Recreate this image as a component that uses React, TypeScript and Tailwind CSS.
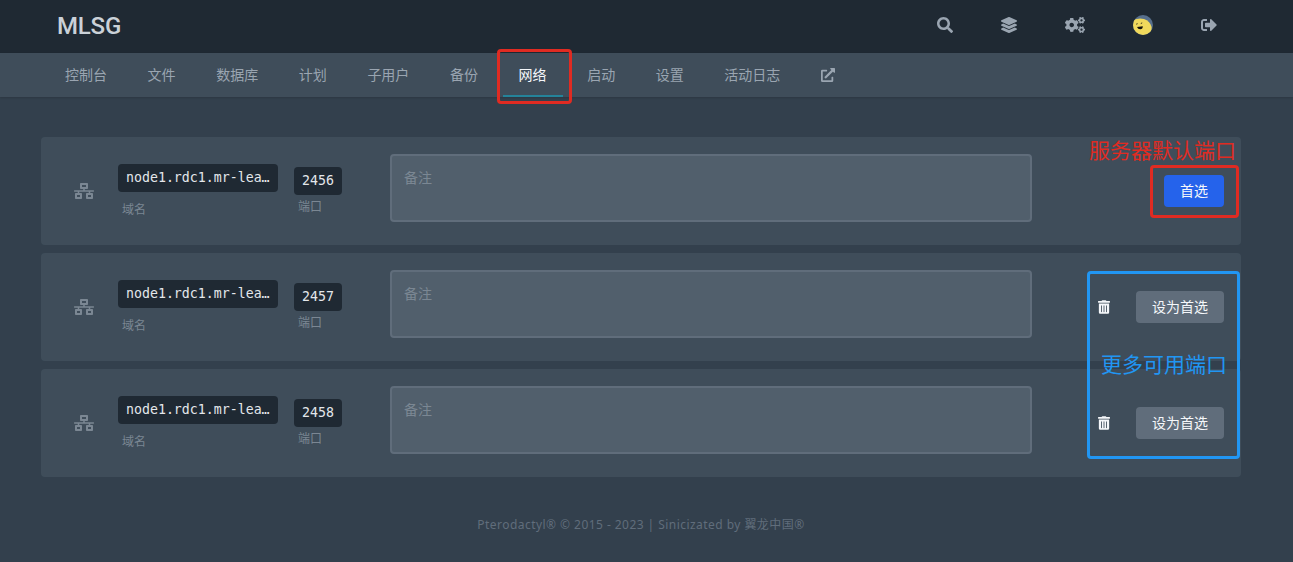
import React from "react";
import {
  FaSearch,
  FaLayerGroup,
  FaCogs,
  FaSignOutAlt,
  FaExternalLinkAlt,
  FaNetworkWired,
  FaTrashAlt,
} from "react-icons/fa";

const tabs = ["控制台", "文件", "数据库", "计划", "子用户", "备份", "网络", "启动", "设置", "活动日志"];

const allocations = [
  { port: "2456", primary: true },
  { port: "2457", primary: false },
  { port: "2458", primary: false },
];

function Avatar() {
  return (
    <svg viewBox="0 0 20 20" className="size-5">
      <defs>
        <clipPath id="avatar-clip">
          <circle cx="10" cy="10" r="10" />
        </clipPath>
      </defs>
      <g clipPath="url(#avatar-clip)">
        <rect width="20" height="20" fill="#576f8c" />
        <path d="M-2 6Q5 2.4 11 4Q17 6 18.6 12L18 22H-2Z" fill="#f0d95c" />
        <path d="M3.2 9.2l1.4-.5M7.8 8.5l1.4-.6" stroke="#3a3520" strokeWidth="1" />
        <path d="M4 12L9.8 11.2Q9.8 14 7.3 14.2Q5 14.3 4 12Z" fill="#14120c" />
      </g>
    </svg>
  );
}

function Header() {
  return (
    <header className="h-[53px] bg-[#1f2933]">
      <div className="ml-[41px] flex h-full w-[1200px] items-center justify-between pr-6 pl-4">
        <h1 className="pb-[2px] font-[Roboto,sans-serif] text-2xl font-medium tracking-[-0.2px] text-[#cad1d8]">MLSG</h1>
        <div className="flex items-center gap-12 pb-[3px] text-base text-[#9aa5b1]">
          <FaSearch />
          <FaLayerGroup />
          <FaCogs className="h-4 w-5" />
          <Avatar />
          <FaSignOutAlt />
        </div>
      </div>
    </header>
  );
}

function SubNavigation() {
  return (
    <nav className="h-11 bg-[#3f4d5a] shadow-[0_1px_2px_rgba(0,0,0,0.15)]">
      <div className="ml-[49px] flex h-full gap-[8.6px] text-sm text-[#9aa5b1]">
        {tabs.map((tab) => (
          <a
            key={tab}
            className={
              tab === "网络"
                ? "flex items-center px-4 text-[#f5f7fa] shadow-[inset_0_-2px_#24839a]"
                : "flex items-center px-4"
            }
          >
            {tab}
          </a>
        ))}
        <a className="flex items-center px-4">
          <FaExternalLinkAlt />
        </a>
      </div>
    </nav>
  );
}

function AllocationRow({ port, primary }: { port: string; primary: boolean }) {
  return (
    <div className="flex h-[108px] items-center rounded bg-[#3f4d5a] pr-[17px] pl-[33px]">
      <FaNetworkWired className="h-4 w-5 text-[#7b8793]" />
      <div className="ml-6 w-40">
        <div className="h-7 rounded bg-[#1f2933] px-2 font-['DejaVu_Sans_Mono',monospace] text-[13.25px] leading-7 text-[#e4e7eb]">
          node1.rdc1.mr-lea…
        </div>
        <p className="mt-[9px] pl-1 text-xs leading-[17px] text-[#7b8793]">域名</p>
      </div>
      <div className="ml-4 w-12">
        <div className="h-7 rounded bg-[#1f2933] px-2 font-['DejaVu_Sans_Mono',monospace] text-[13.25px] leading-7 text-[#e4e7eb]">
          {port}
        </div>
        <p className="mt-[3px] pl-1 text-xs leading-[17px] text-[#7b8793]">端口</p>
      </div>
      <div className="mb-[6px] ml-12 h-[68px] w-[642px] rounded border-2 border-[#606d7b] bg-[#515f6c] p-3 text-sm leading-5 text-[#7b8793]">
        备注
      </div>
      <div className="ml-auto flex items-center gap-[26px] text-sm text-[#f5f7fa]">
        {primary ? (
          <button className="h-8 rounded bg-[#2563eb] px-4">首选</button>
        ) : (
          <>
            <FaTrashAlt className="h-[14px] w-3" />
            <button className="h-8 rounded bg-[#606d7b] px-4">设为首选</button>
          </>
        )}
      </div>
    </div>
  );
}

export default function App() {
  return (
    <div className="relative h-[562px] w-[1293px] overflow-hidden bg-[#33404d] font-['Noto_Sans','Noto_Sans_CJK_SC',sans-serif]">
      <Header />
      <SubNavigation />
      <main className="mt-10 ml-[41px] flex w-[1200px] flex-col gap-2">
        {allocations.map((allocation) => (
          <AllocationRow key={allocation.port} {...allocation} />
        ))}
      </main>
      <footer className="mt-10 ml-[41px] w-[1200px] text-center text-xs leading-4 tracking-[0.45px] text-[#606d7b]">
        Pterodactyl® © 2015 - 2023 | Sinicizated by 翼龙中国®
      </footer>

      <div className="absolute top-[48.5px] left-[497px] h-[55px] w-[75px] rounded border-3 border-[#e02b22]" />
      <div className="absolute top-[165px] left-[1150px] h-[53px] w-[89px] rounded border-3 border-[#e02b22]" />
      <div className="absolute top-[271px] left-[1087px] h-[188px] w-[153px] rounded border-3 border-[#2196f3]" />
      <span className="absolute top-[135px] left-[1089px] text-[21px] leading-[30px] whitespace-nowrap text-[#e02b22]">
        服务器默认端口
      </span>
      <span className="absolute top-[349px] left-[1101px] text-[21px] leading-[30px] whitespace-nowrap text-[#2196f3]">
        更多可用端口
      </span>
    </div>
  );
}
